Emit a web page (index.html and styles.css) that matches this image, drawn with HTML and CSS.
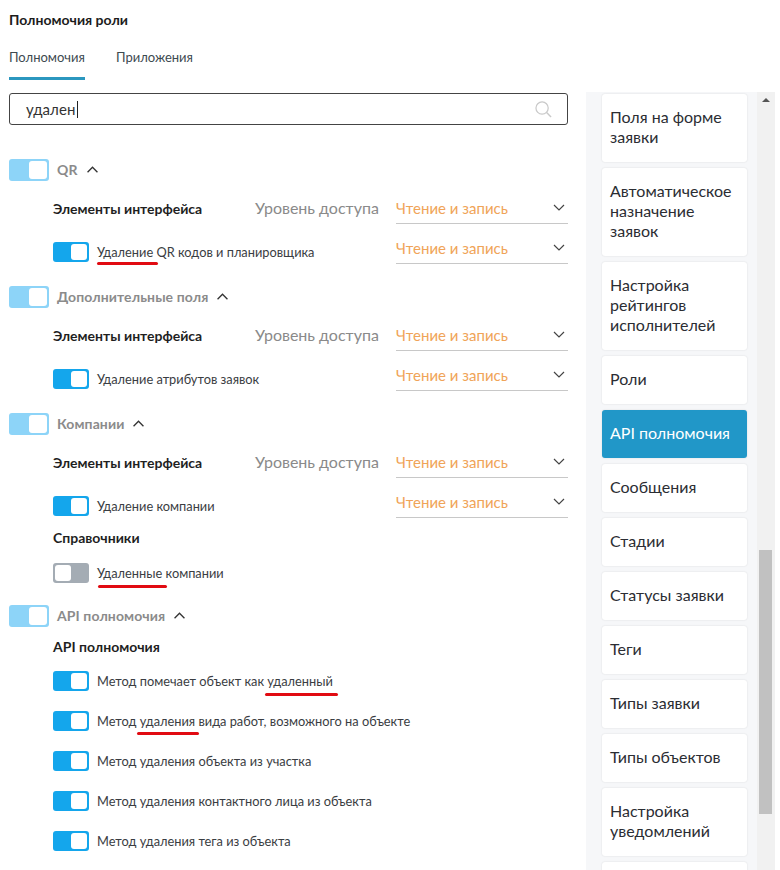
FILE: index.html
```html
<!DOCTYPE html>
<html lang="ru">
<head>
<meta charset="utf-8">
<title>Полномочия роли</title>
<link rel="stylesheet" href="styles.css">
</head>
<body>
<svg class="defs" width="0" height="0" aria-hidden="true">
  <symbol id="up" viewBox="0 0 10 6"><path d="M.5 5.5 5 1l4.500 4.500" fill="none" stroke="#333" stroke-width="1.200"/></symbol>
  <symbol id="down" viewBox="0 0 12 7"><path d="M1 1l5 5 5-5" fill="none" stroke="#444" stroke-width="1.200"/></symbol>
</svg>
<header class="head">
  <h1 class="title">Полномочия роли</h1>
  <nav class="tabs">
    <a class="tab tab-active">Полномочия</a>
    <a class="tab">Приложения</a>
  </nav>
</header>
<div class="layout">
  <main class="left">
    <div class="search">
      <span class="search-text">удален</span><span class="caret"></span>
      <svg class="search-icon" viewBox="0 0 18 18"><circle cx="7.500" cy="7.500" r="6.500" fill="none" stroke="#c9c9c9" stroke-width="1.300"/><path d="M12.300 12.300 17 17" stroke="#c9c9c9" stroke-width="1.500"/></svg>
    </div>

    <section class="group">
      <div class="group-head"><span class="sw sw-group"><i></i></span><b class="group-name">QR</b><svg class="ch-up"><use href="#up"/></svg></div>
      <div class="row"><b class="sub">Элементы интерфейса</b><span class="lvl">Уровень доступа</span><div class="sel"><span>Чтение и запись</span><svg class="ch-down"><use href="#down"/></svg></div></div>
      <div class="row"><span class="sw"><i></i></span><span class="lab"><span class="mark mark-a">Удаление</span> QR кодов и планировщика</span><div class="sel"><span>Чтение и запись</span><svg class="ch-down"><use href="#down"/></svg></div></div>
    </section>

    <section class="group">
      <div class="group-head"><span class="sw sw-group"><i></i></span><b class="group-name">Дополнительные поля</b><svg class="ch-up"><use href="#up"/></svg></div>
      <div class="row"><b class="sub">Элементы интерфейса</b><span class="lvl">Уровень доступа</span><div class="sel"><span>Чтение и запись</span><svg class="ch-down"><use href="#down"/></svg></div></div>
      <div class="row"><span class="sw"><i></i></span><span class="lab">Удаление атрибутов заявок</span><div class="sel"><span>Чтение и запись</span><svg class="ch-down"><use href="#down"/></svg></div></div>
    </section>

    <section class="group">
      <div class="group-head"><span class="sw sw-group"><i></i></span><b class="group-name">Компании</b><svg class="ch-up"><use href="#up"/></svg></div>
      <div class="row"><b class="sub">Элементы интерфейса</b><span class="lvl">Уровень доступа</span><div class="sel"><span>Чтение и запись</span><svg class="ch-down"><use href="#down"/></svg></div></div>
      <div class="row"><span class="sw"><i></i></span><span class="lab">Удаление компании</span><div class="sel"><span>Чтение и запись</span><svg class="ch-down"><use href="#down"/></svg></div></div>
      <b class="sub sub-block">Справочники</b>
      <div class="line line-first"><span class="sw sw-off"><i></i></span><span class="lab"><span class="mark mark-b">Удаленные</span> компании</span></div>
    </section>

    <section class="group">
      <div class="group-head"><span class="sw sw-group"><i></i></span><b class="group-name">API полномочия</b><svg class="ch-up"><use href="#up"/></svg></div>
      <b class="sub sub-block">API полномочия</b>
      <div class="lines">
        <div class="line"><span class="sw"><i></i></span><span class="lab">Метод помечает объект как <span class="mark mark-c">удаленный</span></span></div>
        <div class="line"><span class="sw"><i></i></span><span class="lab">Метод <span class="mark mark-d">удаления</span> вида работ, возможного на объекте</span></div>
        <div class="line"><span class="sw"><i></i></span><span class="lab">Метод удаления объекта из участка</span></div>
        <div class="line"><span class="sw"><i></i></span><span class="lab">Метод удаления контактного лица из объекта</span></div>
        <div class="line"><span class="sw"><i></i></span><span class="lab">Метод удаления тега из объекта</span></div>
      </div>
    </section>
  </main>

  <aside class="panel">
    <a class="card">Поля на форме заявки</a>
    <a class="card">Автоматическое назначение заявок</a>
    <a class="card">Настройка рейтингов исполнителей</a>
    <a class="card">Роли</a>
    <a class="card card-active">API полномочия</a>
    <a class="card">Сообщения</a>
    <a class="card">Стадии</a>
    <a class="card">Статусы заявки</a>
    <a class="card">Теги</a>
    <a class="card">Типы заявки</a>
    <a class="card">Типы объектов</a>
    <a class="card">Настройка уведомлений</a>
    <a class="card card-empty"></a>
  </aside>
  <div class="scroll"><span class="arrow"></span><span class="thumb"></span></div>
</div>
</body>
</html>
```

FILE: styles.css
```css
* { box-sizing: border-box; }
html, body { margin: 0; height: 870px; overflow: hidden; background: #fff; }
body { font-family: Lato, "Open Sans", sans-serif; color: #26282b; }
.defs { position: absolute; }

.head { padding: 12px 0 0 9px; height: 93px; }
.title { margin: 0; font-size: 14px; line-height: 16px; font-weight: 700; color: #1c1c1c; }
.tabs { display: flex; gap: 31px; margin-top: 21px; }
.tab { font-size: 13px; line-height: 16px; height: 31px; color: #3d4a50; }
.tab-active { border-bottom: 3px solid #2b97bf; }

.layout { display: flex; height: 777px; padding-right: 5px; }
.left { width: 586px; padding: 0 18px 0 9px; flex: none; }

.search { display: flex; align-items: center; height: 32px; border: 1px solid #444; border-radius: 3px; padding: 0 15px 0 16px; }
.search-text { font-size: 15px; letter-spacing: .1px; padding-bottom: 1px; color: #333; }
.caret { width: 1px; height: 17px; background: #222; margin-left: 1px; }
.search-icon { width: 17px; height: 17px; margin-left: auto; }

.group { margin-bottom: 22px; }
.search + .group { margin-top: 34px; }
.group-head { display: flex; align-items: center; height: 22px; margin-bottom: 15px; }
.group-name { margin-left: 8px; padding-bottom: 2px; font-size: 14px; letter-spacing: .1px; color: #8b8b8b; }
.ch-up { width: 11px; height: 7px; margin: 0 0 2px 9px; }

.sw { display: flex; justify-content: flex-end; align-items: center; width: 36px; height: 20px; padding: 0 2px; border-radius: 3px; background: #14a6ec; flex: none; }
.sw i { display: block; width: 16px; height: 16px; border-radius: 3px; background: #fff; }
.sw-group { width: 40px; height: 22px; background: #8dd4f8; }
.sw-group i { width: 18px; height: 18px; }
.sw-off { justify-content: flex-start; background: #a4acb4; }

.row { display: grid; grid-template-columns: 36px 8px 158px 1fr 172px; align-items: center; height: 28px; padding-left: 44px; }
.row + .row { margin-top: 12px; }
.row .sub { grid-column: 1 / 4; margin-bottom: 2px; }
.row .lvl { grid-column: 4; margin-bottom: 5px; }
.row .sw { grid-column: 1; margin-top: 4px; }
.row .lab { grid-column: 3 / 5; margin-top: 4px; }
.row .sel { grid-column: 5; }

.sub { font-size: 14px; line-height: 20px; font-weight: 700; color: #1f1f1f; white-space: nowrap; }
.sub-block { display: block; height: 20px; margin: 10px 0 0 44px; }
.group-head + .sub-block { margin-top: -5px; }
.lvl { font-size: 16px; color: #8a8a8a; white-space: nowrap; }
.lab { font-size: 12.800px; line-height: 20px; color: #3a3d42; white-space: nowrap; }

.sel { display: flex; justify-content: space-between; align-items: center; height: 28px; border-bottom: 1px solid #c8c8c8; font-size: 15px; color: #f0a458; padding: 0 3px 4px 0; }
.ch-down { width: 12px; height: 7px; margin-top: -1px; }

.line { display: flex; align-items: center; gap: 8px; height: 20px; margin-left: 44px; }
.line-first { margin-top: 15px; }
.lines { display: flex; flex-direction: column; gap: 20px; margin-top: 14px; }

.mark { position: relative; }
.mark::after { content: ""; position: absolute; left: 0; right: 0; bottom: -5px; height: 3px; border-radius: 2px; background: #e10b12; }
.mark-a::after { right: -5px; }
.mark-b::after { left: 1px; right: -5px; bottom: -7px; }
.mark-c::after { left: -2px; right: -5px; bottom: -7px; }
.mark-d::after { left: -3px; right: -4px; bottom: -6px; }

.panel { flex: none; width: 171px; height: 778px; margin-top: -1px; padding: 2px 10px 0 16px; background: #f6f7f9; display: flex; flex-direction: column; gap: 6px; overflow: hidden; }
.card { display: block; flex: none; padding: 13px 8px 15px; font-size: 16px; line-height: 20px; color: #2b2d33; background: #fff; border-radius: 3px; box-shadow: 0 0 2px rgba(0,0,0,.12); }
.card-active { background: #2197c8; color: #fff; }
.card-empty { height: 48px; }

.scroll { position: relative; flex: none; width: 18px; height: 778px; margin-top: -1px; background: #f1f1f1; }
.arrow { position: absolute; left: 5px; top: 6px; border: 4px solid transparent; border-top: 0; border-bottom: 4px solid #555; }
.thumb { position: absolute; left: 2px; top: 458px; width: 13px; height: 264px; background: #c1c1c1; }
```
